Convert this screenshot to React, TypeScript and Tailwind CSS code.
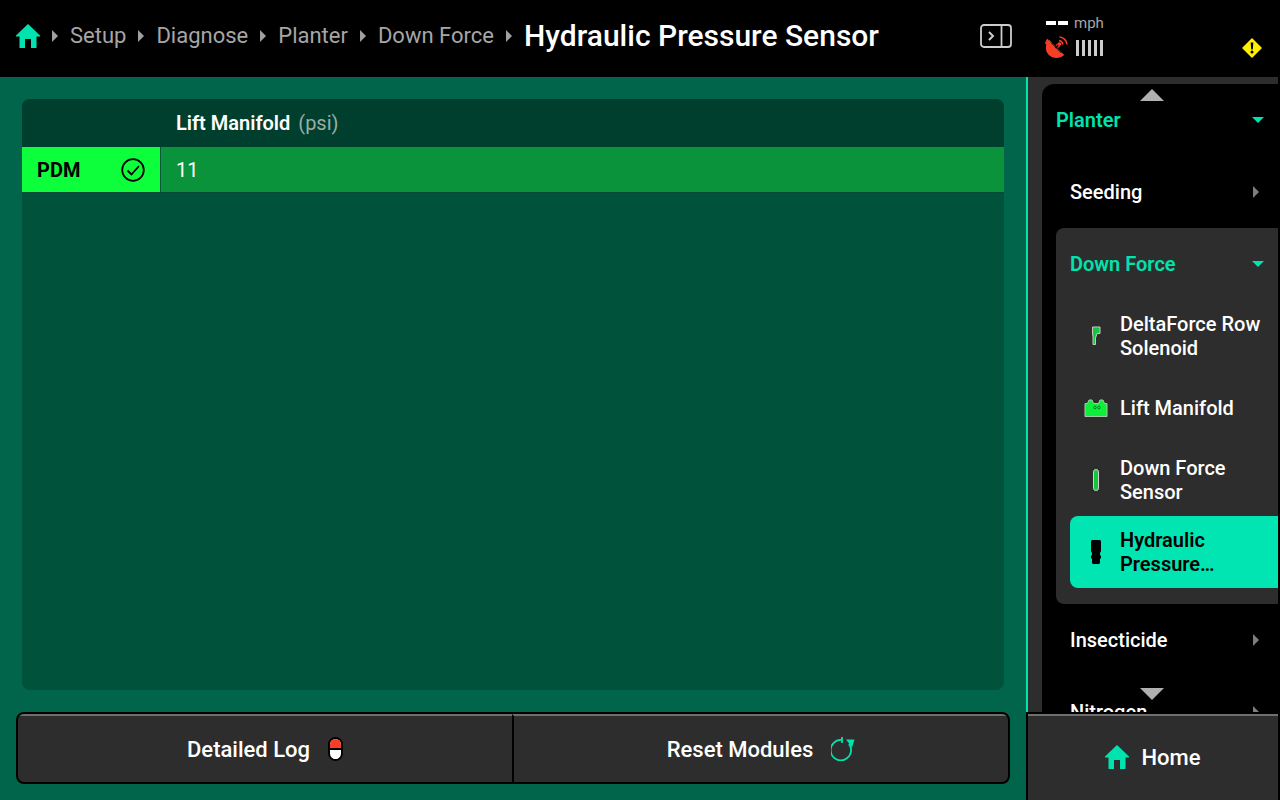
import type { ReactNode } from 'react';

function HomeIcon({ className }: { className?: string }) {
  return (
    <svg viewBox="0 0 24 24" className={className}>
      <path d="M12 0 L24 11.5 V12.5 H20.5 V24 H15 V15 H9 V24 H3.5 V12.5 H0 V11.5 Z" fill="#00e3ae" />
    </svg>
  );
}

function ArrowRight({ color = '#a0a0a0' }: { color?: string }) {
  return (
    <svg viewBox="0 0 6 12" className="h-3 w-1.5 shrink-0">
      <path d="M0 0 L6 6 L0 12 Z" fill={color} />
    </svg>
  );
}

function CaretDown() {
  return (
    <svg viewBox="0 0 12 6" className="h-1.5 w-3 shrink-0">
      <path d="M0 0 H12 L6 6 Z" fill="#00e3ae" />
    </svg>
  );
}

function SatelliteIcon() {
  return (
    <svg viewBox="0 0 24 24" className="h-6 w-6 shrink-0">
      <path d="M5 4 L20 19 A10.6 10.6 0 0 1 5 4 Z" fill="#f63d25" />
      <path d="M4 3.4 A11 11 0 0 0 2 8" fill="none" stroke="#f63d25" strokeWidth="2" />
      <path d="M9 15 L14 9" stroke="#f63d25" strokeWidth="2.4" />
      <circle cx="14" cy="9.5" r="2" fill="#f63d25" />
      <path d="M15 4.5 A5 5 0 0 1 19 8.5" fill="none" stroke="#f63d25" strokeWidth="1.6" />
      <path d="M15.5 1 A8 8 0 0 1 23 8.5" fill="none" stroke="#f63d25" strokeWidth="1.6" />
      <path d="M5 4 A11 11 0 0 0 5 19 A11 11 0 0 0 20 19 Z" fill="#f63d25" />
      <path d="M7 6.5 L17.5 17" stroke="#000" strokeWidth="1" />
      <path d="M11.5 12 L15 8" stroke="#000" strokeWidth="1.4" />
      <circle cx="15.5" cy="8" r="1.8" fill="#f63d25" />
    </svg>
  );
}

function WarningIcon() {
  return (
    <svg viewBox="0 0 20 20" className="h-5 w-5 shrink-0">
      <path d="M10 0 L20 10 L10 20 L0 10 Z" fill="#ffee00" />
      <path d="M8.7 4.5 H11.3 L10.8 11.5 H9.2 Z" fill="#000" />
      <circle cx="10" cy="14" r="1.5" fill="#000" />
    </svg>
  );
}

function PanelToggleIcon() {
  return (
    <svg viewBox="0 0 32 24" className="h-6 w-8 shrink-0" fill="none" stroke="#cccccc">
      <rect x="1" y="1" width="30" height="22" rx="3" strokeWidth="1.8" />
      <path d="M21.5 1 V23" strokeWidth="1.8" />
      <path d="M9 8 L13 12 L9 16" strokeWidth="2" />
    </svg>
  );
}

function CheckCircle() {
  return (
    <svg viewBox="0 0 24 24" className="h-6 w-6 shrink-0" fill="none" stroke="#000">
      <circle cx="12" cy="12" r="10.8" strokeWidth="1.8" />
      <path d="M6.5 12.5 L10.5 16.5 L18 8" strokeWidth="1.8" />
    </svg>
  );
}

function LogIcon() {
  return (
    <span className="flex h-6 w-[15px] shrink-0 flex-col items-center overflow-hidden rounded-full border-2 border-black bg-white">
      <span className="h-[9px] w-full bg-[#f63d25]" />
      <span className="h-[2px] w-full bg-black" />
      <span className="h-[9px] w-[9px] rounded-full bg-white" />
    </span>
  );
}

function ResetIcon() {
  return (
    <svg viewBox="0 0 24 24" className="h-6 w-6 shrink-0" fill="none">
      <path d="M18 6 A10.2 10.2 0 1 1 11 2" stroke="#00e3ae" strokeWidth="1.8" transform="translate(0 1)" />
      <path d="M11 0 V6" stroke="#00e3ae" strokeWidth="1.8" />
      <path d="M15 2.5 H23.5 L21 10.5 Z" fill="#00e3ae" />
    </svg>
  );
}

function SolenoidIcon() {
  return (
    <svg viewBox="0 0 10 20" className="h-5 w-2.5">
      <path d="M1.5 1 H9 V7.5 H6 L4.5 12 V18.5 H2 V10 L1.5 8 Z" fill="#14c53e" stroke="#c8c8c8" strokeWidth="1" />
    </svg>
  );
}

function ManifoldIcon() {
  return (
    <svg viewBox="0 0 24 20" className="h-5 w-6">
      <path d="M1 18.5 V5.5 H3.5 L5 2 H8 L9.5 5.5 H14.5 L16 2 H19 L20.5 5.5 H23 V18.5 Z" fill="#0cf03a" stroke="#a8c8a8" strokeWidth="1" />
      <circle cx="11" cy="9.5" r="1.3" fill="none" stroke="#076b20" strokeWidth="0.8" />
      <circle cx="15" cy="9.5" r="1.3" fill="none" stroke="#076b20" strokeWidth="0.8" />
    </svg>
  );
}

function SensorIcon() {
  return (
    <svg viewBox="0 0 6 22" className="h-[22px] w-1.5">
      <rect x="0.5" y="0.5" width="5" height="21" rx="2.5" fill="#14c53e" stroke="#d0d0d0" strokeWidth="1" />
    </svg>
  );
}

function PressureIcon() {
  return (
    <svg viewBox="0 0 12 24" className="h-6 w-3">
      <path d="M2 0 H10 L11 1 V11 L10 13 V15 L11 16 V18 L10 19 V23 L9 24 H3 L2 23 V19 L1 18 V16 L2 15 V13 L1 11 V1 Z" fill="#000" />
    </svg>
  );
}

const crumbs = ['Setup', 'Diagnose', 'Planter', 'Down Force'];

function TopBar() {
  return (
    <header className="flex h-[77px] shrink-0 items-center bg-black pl-4">
      <div className="flex min-w-0 flex-1 items-center gap-3 pb-[6px]">
        <HomeIcon className="h-6 w-6 shrink-0" />
        {crumbs.map((c) => (
          <div key={c} className="flex items-center gap-3">
            <ArrowRight />
            <span className="text-[22px] leading-7 text-[#a6a6a6]">{c}</span>
          </div>
        ))}
        <ArrowRight />
        <h1 className="text-[30px] leading-9 font-medium whitespace-nowrap text-white">Hydraulic Pressure Sensor</h1>
      </div>
      <div className="mr-8 pb-[6px]">
        <PanelToggleIcon />
      </div>
      <div className="flex w-[236px] shrink-0 flex-col gap-[5px] pt-[6px] pb-[8px]">
        <div className="flex h-4 items-center pl-[2px]">
          <span className="h-[4px] w-[10px] bg-white" />
          <span className="ml-[2px] h-[4px] w-[10px] bg-white" />
          <span className="ml-[6px] text-[15px] leading-4 text-[#a6a6a6]">mph</span>
        </div>
        <div className="flex items-center">
          <SatelliteIcon />
          <div className="ml-2 flex gap-[3px]">
            {[0, 1, 2, 3, 4].map((b) => (
              <span key={b} className="h-4 w-[3px] bg-[#cccccc]" />
            ))}
          </div>
          <div className="ml-auto mr-[18px]">
            <WarningIcon />
          </div>
        </div>
      </div>
    </header>
  );
}

function LiftTable() {
  return (
    <div className="flex min-h-0 flex-1 flex-col overflow-hidden rounded-lg bg-[#00523a]">
      <div className="flex h-12 shrink-0 items-center bg-[#003f2e] pl-[154px] text-xl">
        <span className="font-semibold text-white">Lift Manifold</span>
        <span className="ml-2 text-[#9aaea8]">(psi)</span>
      </div>
      <div className="flex h-[46px] shrink-0 border-b border-[#004a33]">
        <div className="flex w-[138px] items-center justify-between bg-[#0dff3b] pr-[15px] pl-[15px]">
          <span className="text-xl font-bold text-black">PDM</span>
          <CheckCircle />
        </div>
        <div className="flex flex-1 items-center border-l border-[#00523a] bg-[#0a933b] pl-[15px] text-xl text-white">
          11
        </div>
      </div>
    </div>
  );
}

function ActionButton({ label, icon, divider }: { label: string; icon: ReactNode; divider?: boolean }) {
  return (
    <button
      className={`flex flex-1 items-center justify-center gap-[18px] border-t-2 border-t-[#6e6e6e] text-[22px] font-medium text-white ${
        divider ? 'border-l-2 border-l-black' : ''
      }`}
    >
      <span>{label}</span>
      {icon}
    </button>
  );
}

function SideRow({ label, pad }: { label: string; pad: string }) {
  return (
    <div className={`flex h-[72px] shrink-0 items-center justify-between pr-[19px] text-xl font-medium text-white ${pad}`}>
      <span>{label}</span>
      <ArrowRight color="#7d7d7d" />
    </div>
  );
}

function OpenRow({ label, pad }: { label: string; pad: string }) {
  return (
    <div className={`flex h-[72px] shrink-0 items-center justify-between pr-[14px] text-xl font-semibold text-[#00e3ae] ${pad}`}>
      <span>{label}</span>
      <CaretDown />
    </div>
  );
}

const sensors = [
  { label: 'DeltaForce Row Solenoid', icon: <SolenoidIcon /> },
  { label: 'Lift Manifold', icon: <ManifoldIcon /> },
  { label: 'Down Force Sensor', icon: <SensorIcon /> },
  { label: 'Hydraulic Pressure Sensor', icon: <PressureIcon />, active: true },
];

function SensorList() {
  return (
    <div className="ml-[14px] flex shrink-0 flex-col rounded-l-lg bg-[#2d2d2d] pb-4 pl-[14px]">
      <OpenRow label="Down Force" pad="" />
      {sensors.map((s) => (
        <div
          key={s.label}
          className={`flex h-[72px] shrink-0 items-center rounded-l-lg text-xl leading-6 font-medium ${
            s.active ? 'bg-[#00e5b2] font-semibold text-black' : 'text-white'
          }`}
        >
          <div className="flex w-[50px] shrink-0 justify-center pl-[2px]">{s.icon}</div>
          <span className="line-clamp-2 w-[146px]">{s.label}</span>
        </div>
      ))}
    </div>
  );
}

function Sidebar() {
  return (
    <aside className="flex w-[254px] shrink-0 flex-col bg-black">
      <div className="min-h-0 flex-1 border-l-2 border-[#00e3ae]">
        <div className="mr-[2px] h-full bg-[#2d2d2d] pt-[7px] pl-[14px]">
          <div className="relative flex h-full flex-col overflow-hidden rounded-tl-xl bg-black">
            <div className="absolute top-[5px] left-[98px] h-0 w-0 border-x-[12px] border-b-[12px] border-x-transparent border-b-[#b0b0b0]" />
            <OpenRow label="Planter" pad="pl-[14px]" />
            <SideRow label="Seeding" pad="pl-7" />
            <SensorList />
            <SideRow label="Insecticide" pad="pl-7" />
            <SideRow label="Nitrogen" pad="pl-7" />
            <div className="absolute top-[604px] left-[98px] h-0 w-0 border-x-[12px] border-t-[12px] border-x-transparent border-t-[#b0b0b0]" />
          </div>
        </div>
      </div>
      <div className="flex h-[88px] shrink-0 items-center justify-center gap-3 border-2 border-b-0 border-black bg-[#2d2d2d] shadow-[inset_0_2px_0_#707070]">
        <HomeIcon className="h-6 w-6 shrink-0" />
        <span className="text-[22px] font-medium text-white">Home</span>
      </div>
    </aside>
  );
}

export default function App() {
  return (
    <div className="flex h-[800px] w-[1280px] flex-col overflow-hidden bg-black [font-family:Roboto,sans-serif]">
      <TopBar />
      <div className="flex min-h-0 flex-1">
        <main className="flex min-w-0 flex-1 flex-col bg-[#00654a] pt-[22px] pb-4">
          <div className="flex min-h-0 flex-1 px-[22px]">
            <LiftTable />
          </div>
          <div className="mx-4 mt-[22px] flex h-[72px] shrink-0 overflow-hidden rounded-lg border-2 border-black bg-[#2d2d2d]">
            <ActionButton label="Detailed Log" icon={<LogIcon />} />
            <ActionButton label="Reset Modules" icon={<ResetIcon />} divider />
          </div>
        </main>
        <Sidebar />
      </div>
    </div>
  );
}
